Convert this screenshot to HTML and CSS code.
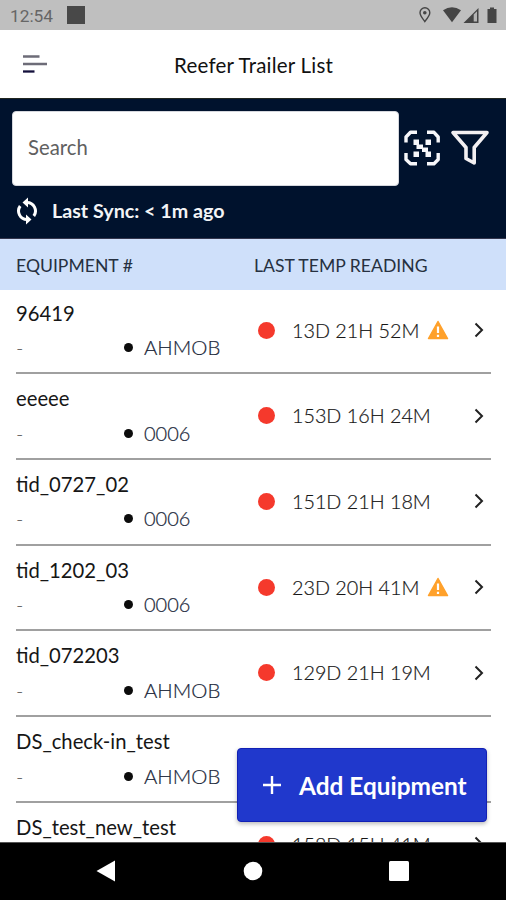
FILE: index.html
```html
<!DOCTYPE html>
<html lang="en">
<head>
<meta charset="utf-8">
<title>Reefer Trailer List</title>
<link rel="stylesheet" href="styles.css">
</head>
<body>
<div class="phone">
  <div class="status">
    <span class="time">12:54</span><span class="notif"></span>
    <svg class="status-icons" width="82" height="30" viewBox="0 0 82 30">
      <path d="M7.800 21.500C5 17.800 3 15.400 3 12.700a4.900 4.900 0 0 1 9.800 0c0 2.700-2 5.100-5 8.800z" fill="none" stroke="#454545" stroke-width="1.400"/>
      <circle cx="7.800" cy="12.800" r="1.800" fill="#454545"/>
      <path d="M26 10.300Q35 4 44 10.300L35 22.300z" fill="#454545"/>
      <path d="M46.500 23L61.500 8V23z" fill="#454545"/><path d="M56.700 14.500l3.300-3.300V21.500h-3.300z" fill="#b4b4b4"/>
      <path d="M70.500 9h2.500V7.500h4V9h2.500v14h-9z" fill="#454545"/>
    </svg>
  </div>
  <header class="appbar">
    <svg class="menu" width="26" height="20" viewBox="0 0 26 20"><path d="M1 2.500H17.500M1 10H25" stroke="#6d6c78" stroke-width="2.300"/><path d="M1 17.500H12.500" stroke="#14103c" stroke-width="2.300"/></svg>
    <h1 class="title">Reefer Trailer List</h1>
  </header>
  <section class="tools">
    <div class="search-row">
      <div class="search">Search</div>
      <svg class="scan" width="36" height="36" viewBox="0 0 36 36">
        <path d="M2 12.500V7L6.500 2.300H13M23 2.300H30L34.200 7V12.500M34.200 23V29.500L30 33.700H23M13 33.700H6.500L2 29.500V23" fill="none" stroke="#f7f7fa" stroke-width="3.400" stroke-linejoin="round"/>
        <path d="M9.500 9.500h5.500v5.500h-5.500zM21.500 9.500h5.500v5.500h-5.500zM9.500 21.500h5.500v5.500h-5.500zM21.500 21.500h5.500v5.500h-5.500zM12.500 14.500h6.500v3h5v4.500h-6v-3h-5.500z" fill="#f7f7fa"/>
      </svg>
      <svg class="filter" width="40" height="36" viewBox="0 0 40 36"><path d="M3 2.500H37L24.200 17.500V33L16 28.500V17.500z" fill="none" stroke="#f3f0f2" stroke-width="3.600" stroke-linejoin="round"/></svg>
    </div>
    <div class="sync">
      <svg width="22" height="28" viewBox="0 0 22 28"><path d="M11 5.500A8.500 8.500 0 0 1 17.800 19M11 22.500A8.500 8.500 0 0 1 4.200 9" fill="none" stroke="#fff" stroke-width="3"/><path d="M12 .5V10.500L6.500 5.500zM10 17.500V27.500L15.500 22.500z" fill="#fff"/></svg>
      <span class="sync-text">Last Sync: &lt; 1m ago</span>
    </div>
  </section>
  <div class="columns"><span class="col-a">EQUIPMENT #</span><span class="col-b">LAST TEMP READING</span></div>
  <main class="list">
    <article class="row"><div class="equip"><div class="name">96419</div><div class="meta"><span class="dash">-</span><i class="dot"></i><span class="code">AHMOB</span></div></div><div class="reading"><i class="alert"></i><span class="age">13D 21H 52M</span><svg class="warn" width="22" height="20" viewBox="0 0 22 20"><path d="M11 1.500L20.500 18.500H1.500z" fill="#ffa12b" stroke="#ffa12b" stroke-width="1.500" stroke-linejoin="round"/><path d="M11 6.500V13M11 14.800V17" stroke="#fff" stroke-width="2.200"/></svg><svg class="chev" width="10" height="16" viewBox="0 0 10 16"><path d="M1.500 1.500L8 8L1.500 14.500" fill="none" stroke="#222" stroke-width="2"/></svg></div></article>
    <article class="row"><div class="equip"><div class="name">eeeee</div><div class="meta"><span class="dash">-</span><i class="dot"></i><span class="code num">0006</span></div></div><div class="reading"><i class="alert"></i><span class="age">153D 16H 24M</span><svg class="chev" width="10" height="16" viewBox="0 0 10 16"><path d="M1.500 1.500L8 8L1.500 14.500" fill="none" stroke="#222" stroke-width="2"/></svg></div></article>
    <article class="row"><div class="equip"><div class="name">tid_0727_02</div><div class="meta"><span class="dash">-</span><i class="dot"></i><span class="code num">0006</span></div></div><div class="reading"><i class="alert"></i><span class="age">151D 21H 18M</span><svg class="chev" width="10" height="16" viewBox="0 0 10 16"><path d="M1.500 1.500L8 8L1.500 14.500" fill="none" stroke="#222" stroke-width="2"/></svg></div></article>
    <article class="row"><div class="equip"><div class="name">tid_1202_03</div><div class="meta"><span class="dash">-</span><i class="dot"></i><span class="code num">0006</span></div></div><div class="reading"><i class="alert"></i><span class="age">23D 20H 41M</span><svg class="warn" width="22" height="20" viewBox="0 0 22 20"><path d="M11 1.500L20.500 18.500H1.500z" fill="#ffa12b" stroke="#ffa12b" stroke-width="1.500" stroke-linejoin="round"/><path d="M11 6.500V13M11 14.800V17" stroke="#fff" stroke-width="2.200"/></svg><svg class="chev" width="10" height="16" viewBox="0 0 10 16"><path d="M1.500 1.500L8 8L1.500 14.500" fill="none" stroke="#222" stroke-width="2"/></svg></div></article>
    <article class="row"><div class="equip"><div class="name">tid_072203</div><div class="meta"><span class="dash">-</span><i class="dot"></i><span class="code">AHMOB</span></div></div><div class="reading"><i class="alert"></i><span class="age">129D 21H 19M</span><svg class="chev" width="10" height="16" viewBox="0 0 10 16"><path d="M1.500 1.500L8 8L1.500 14.500" fill="none" stroke="#222" stroke-width="2"/></svg></div></article>
    <article class="row"><div class="equip"><div class="name">DS_check-in_test</div><div class="meta"><span class="dash">-</span><i class="dot"></i><span class="code">AHMOB</span></div></div></article>
    <article class="row"><div class="equip"><div class="name">DS_test_new_test</div></div><div class="reading"><i class="alert"></i><span class="age">158D 15H 41M</span><svg class="chev" width="10" height="16" viewBox="0 0 10 16"><path d="M1.500 1.500L8 8L1.500 14.500" fill="none" stroke="#222" stroke-width="2"/></svg></div></article>
    <button class="add"><svg width="20" height="20" viewBox="0 0 20 20"><path d="M10 1V19M1 10H19" stroke="#fff" stroke-width="2.400"/></svg><span class="add-text">Add Equipment</span></button>
  </main>
  <nav class="nav">
    <svg width="20" height="22" viewBox="0 0 20 22"><path d="M19 .5V21.500L.5 11z" fill="#fff"/></svg>
    <svg width="20" height="20" viewBox="0 0 20 20"><circle cx="10" cy="10" r="9.300" fill="#fff"/></svg>
    <svg width="20" height="20" viewBox="0 0 20 20"><rect width="20" height="20" rx="1.500" fill="#fff"/></svg>
  </nav>
</div>
</body>
</html>
```
FILE: styles.css
```css
* { box-sizing: border-box; }
body { margin: 0; background: #fff; font-family: Lato, sans-serif; color: #161616; }
svg { display: block; flex: none; }
.phone { width: 506px; height: 900px; display: flex; flex-direction: column; overflow: hidden; }
.status { flex: none; height: 30px; background: #bfbfbf; display: flex; align-items: center; padding-left: 10px; }
.time { width: 57px; font: 17.300px/30px Roboto, sans-serif; color: #666; padding-top: 1px; }
.notif { width: 18px; height: 18px; background: #484848; }
.status-icons { margin-left: auto; margin-right: 7px; }
.appbar { flex: none; height: 69px; display: flex; align-items: center; padding-left: 22px; border-bottom: 1px solid #20251f; }
.title { margin: 2px 0 0 126px; font-size: 20.500px; letter-spacing: .22px; font-weight: 400; line-height: 28px; color: #111; white-space: nowrap; }
.tools { flex: none; height: 140px; background: #00122d; padding: 12px 16px 0 12px; border-bottom: 1px solid #34364d; }
.search-row { display: flex; align-items: center; }
.search { width: 387px; height: 75px; background: #fff; border-radius: 4px; line-height: 71px; padding-left: 15px; font-size: 20.300px; color: #606060; border: 1px solid #d5d7dd; }
.scan { margin: -2px 0 0 5px; }
.filter { margin: -2px 0 0 10px; }
.sync { display: flex; align-items: center; height: 28px; margin: 11px 0 0 4px; }
.sync-text { margin: -2px 0 0 14px; color: #f3f4f6; font-size: 19.700px; font-weight: 700; white-space: nowrap; }
.columns { flex: none; height: 51px; background: #cfe0fa; display: flex; padding-left: 16px; line-height: 53px; font-size: 17.600px; color: #263040; white-space: nowrap; }
.col-a { width: 238px; }
.list { position: relative; flex: none; height: 552px; overflow: hidden; padding: 0 15px 0 16px; }
.row { height: 85.700px; border-bottom: 2px solid #a0a0a0; display: flex; }
.row:first-child { height: 84.300px; }
.row:first-child .equip, .row:first-child .reading { margin-top: -1.400px; }
.equip { width: 242px; padding-top: 12px; }
.name { font-size: 20.250px; line-height: 25px; white-space: nowrap; }
.meta { display: flex; align-items: center; height: 28px; margin-top: 8px; font-size: 20px; font-weight: 300; }
.meta span { position: relative; top: -.500px; }
.dash { width: 108px; color: #555; }
.dot { width: 9px; height: 9px; border-radius: 50%; background: #0c0c0c; }
.code { margin-left: 11px; color: #20283a; font-size: 20.400px; -webkit-text-stroke: .2px #20283a; }
.num { font-size: 20px; }
.reading { flex: 1; height: 83px; display: flex; align-items: center; }
.alert { width: 17px; height: 17px; border-radius: 50%; background: #f5392c; }
.age { margin: 0 0 0 17px; font-size: 19.750px; font-weight: 300; white-space: nowrap; -webkit-text-stroke: .2px #161616; }
.warn { margin-left: 8px; }
.chev { margin-left: auto; margin-right: 7px; }
.add { position: absolute; left: 237px; top: 458px; width: 250px; height: 74px; border: 1px solid #1220b5; border-radius: 4px; background: #2038cc; box-shadow: 0 2px 4px #0004; display: flex; align-items: center; padding: 0 0 0 24px; color: #fff; font-family: Lato, sans-serif; }
.add-text { margin: 0 0 0 17px; font-size: 24.400px; font-weight: 700; white-space: nowrap; }
.nav { flex: none; height: 58px; background: #000; display: flex; align-items: center; justify-content: space-between; padding: 0 97px 2px 96px; border-top: 1px solid #555; }
```
